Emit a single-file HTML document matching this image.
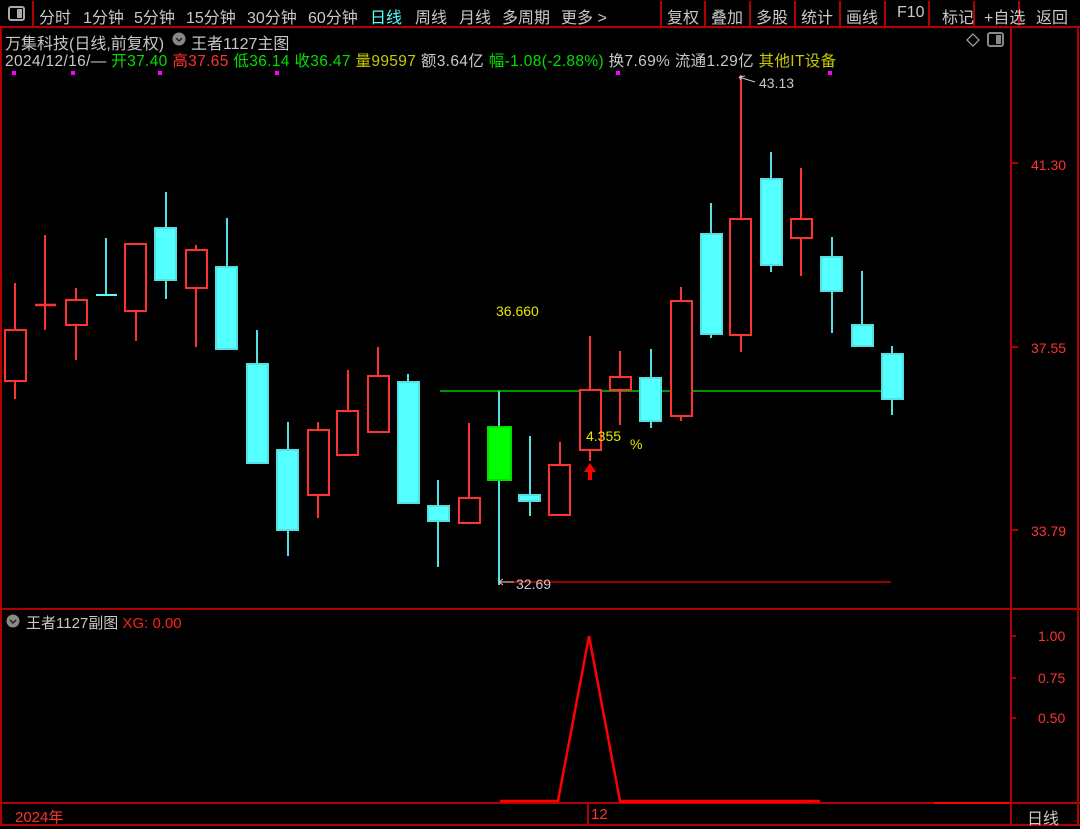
<!DOCTYPE html>
<html><head><meta charset="utf-8"><style>
*{margin:0;padding:0;box-sizing:border-box}
body{width:1080px;height:826px;background:#000;overflow:hidden;font-family:"Liberation Sans","Noto Sans CJK SC",sans-serif;position:relative;color:#c8c8c8}
.t{position:absolute;white-space:nowrap;font-size:15px}
</style></head><body>
<svg width="1080" height="826" style="position:absolute;left:0;top:0" font-family="Liberation Sans, Noto Sans CJK SC, sans-serif">
<g stroke="#b00000" stroke-width="2" fill="none">
<line x1="0" y1="27" x2="1080" y2="27"/>
<line x1="1" y1="27" x2="1" y2="826"/>
<line x1="1011" y1="27" x2="1011" y2="826"/>
<line x1="1078" y1="27" x2="1078" y2="826"/>
<line x1="0" y1="609" x2="1080" y2="609"/>
<line x1="0" y1="803" x2="1080" y2="803"/>
<line x1="0" y1="825" x2="1080" y2="825"/>
<line x1="33" y1="1" x2="33" y2="27"/>
<line x1="661" y1="1" x2="661" y2="27"/>
<line x1="705" y1="1" x2="705" y2="27"/>
<line x1="750" y1="1" x2="750" y2="27"/>
<line x1="795" y1="1" x2="795" y2="27"/>
<line x1="840" y1="1" x2="840" y2="27"/>
<line x1="885" y1="1" x2="885" y2="27"/>
<line x1="929" y1="1" x2="929" y2="27"/>
<line x1="974" y1="1" x2="974" y2="27"/>
<line x1="1019" y1="1" x2="1019" y2="27"/>
<line x1="588" y1="803" x2="588" y2="826"/>
<line x1="1011" y1="163" x2="1018" y2="163"/>
<line x1="1011" y1="347" x2="1018" y2="347"/>
<line x1="1011" y1="530" x2="1018" y2="530"/>
<line x1="1011" y1="636" x2="1016" y2="636"/>
<line x1="1011" y1="678" x2="1016" y2="678"/>
<line x1="1011" y1="718" x2="1016" y2="718"/>
</g>
<rect x="9" y="7" width="15" height="13" rx="2" fill="none" stroke="#aaa" stroke-width="2"/>
<rect x="17" y="9" width="5" height="9" fill="#aaa"/>
<rect x="988" y="33" width="15" height="13" rx="2" fill="none" stroke="#888" stroke-width="2"/>
<rect x="996" y="35" width="5" height="9" fill="#888"/>
<path d="M973 34 L979 40 L973 46 L967 40 Z" fill="none" stroke="#aaa" stroke-width="1.2"/>
<circle cx="179" cy="39" r="6.5" fill="#888"/><path d="M176 38 L179 41 L182 38" stroke="#222" stroke-width="1.5" fill="none"/>
<circle cx="13" cy="621" r="6.5" fill="#888"/><path d="M10 620 L13 623 L16 620" stroke="#222" stroke-width="1.5" fill="none"/>
<g fill="#ff00ff"><rect x="12" y="71" width="4" height="4"/><rect x="71" y="71" width="4" height="4"/><rect x="158" y="71" width="4" height="4"/><rect x="275" y="71" width="4" height="4"/><rect x="616" y="71" width="4" height="4"/><rect x="828" y="71" width="4" height="4"/></g>
<line x1="440" y1="391" x2="892" y2="391" stroke="#00c800" stroke-width="1.5"/>
<line x1="500" y1="582" x2="891" y2="582" stroke="#c80000" stroke-width="1.5"/>
<g stroke-width="2">
<g stroke="#ff3232" fill="#000">
<line x1="15" y1="283" x2="15" y2="399"/><rect x="5" y="330" width="21" height="51"/>
<line x1="45" y1="235" x2="45" y2="330"/><line x1="35" y1="305" x2="56" y2="305" stroke-width="2.5"/>
<line x1="76" y1="288" x2="76" y2="360"/><rect x="66" y="300" width="21" height="25"/>
<line x1="136" y1="243" x2="136" y2="341"/><rect x="125" y="244" width="21" height="67"/>
<line x1="196" y1="245" x2="196" y2="347"/><rect x="186" y="250" width="21" height="38"/>
<line x1="318" y1="422" x2="318" y2="518"/><rect x="308" y="430" width="21" height="65"/>
<line x1="348" y1="370" x2="348" y2="455"/><rect x="337" y="411" width="21" height="44"/>
<line x1="378" y1="347" x2="378" y2="432"/><rect x="368" y="376" width="21" height="56"/>
<line x1="469" y1="423" x2="469" y2="523"/><rect x="459" y="498" width="21" height="25"/>
<line x1="560" y1="442" x2="560" y2="515"/><rect x="549" y="465" width="21" height="50"/>
<line x1="590" y1="336" x2="590" y2="461"/><rect x="580" y="390" width="21" height="60"/>
<line x1="620" y1="351" x2="620" y2="425"/><rect x="610" y="377" width="21" height="13"/>
<line x1="681" y1="287" x2="681" y2="421"/><rect x="671" y="301" width="21" height="115"/>
<line x1="741" y1="75" x2="741" y2="352"/><rect x="730" y="219" width="21" height="116"/>
<line x1="801" y1="168" x2="801" y2="276"/><rect x="791" y="219" width="21" height="19"/>
</g>
<g stroke="#54e0e0" fill="#54ffff">
<line x1="106" y1="238" x2="106" y2="296"/><line x1="96" y1="295" x2="117" y2="295" stroke="#54ffff"/>
<line x1="166" y1="192" x2="166" y2="299"/><rect x="155" y="228" width="21" height="52"/>
<line x1="227" y1="218" x2="227" y2="349"/><rect x="216" y="267" width="21" height="82"/>
<line x1="257" y1="330" x2="257" y2="463"/><rect x="247" y="364" width="21" height="99"/>
<line x1="288" y1="422" x2="288" y2="556"/><rect x="277" y="450" width="21" height="80"/>
<line x1="408" y1="374" x2="408" y2="503"/><rect x="398" y="382" width="21" height="121"/>
<line x1="438" y1="480" x2="438" y2="567"/><rect x="428" y="506" width="21" height="15"/>
<line x1="499" y1="391" x2="499" y2="585"/>
<line x1="530" y1="436" x2="530" y2="516"/><rect x="519" y="495" width="21" height="6"/>
<line x1="651" y1="349" x2="651" y2="428"/><rect x="640" y="378" width="21" height="43"/>
<line x1="711" y1="203" x2="711" y2="338"/><rect x="701" y="234" width="21" height="100"/>
<line x1="771" y1="152" x2="771" y2="272"/><rect x="761" y="179" width="21" height="86"/>
<line x1="832" y1="237" x2="832" y2="333"/><rect x="821" y="257" width="21" height="34"/>
<line x1="862" y1="271" x2="862" y2="346"/><rect x="852" y="325" width="21" height="21"/>
<line x1="892" y1="346" x2="892" y2="415"/><rect x="882" y="354" width="21" height="45"/>
</g>
<rect x="488" y="427" width="23" height="53" fill="#00ff00" stroke="#00e000"/>
</g>
<path d="M590 463 L584 472 L588 472 L588 480 L592 480 L592 472 L596 472 Z" fill="#ff0000"/>
<path d="M739 77 L755 82 M739 77 L745 76 M739 77 L741 80" stroke="#ccc" stroke-width="1" fill="none"/>
<path d="M499 582 L514 582 M499 582 L503 579 M499 582 L503 585" stroke="#ccc" stroke-width="1" fill="none"/>
<polyline points="500,801 558,801 589,636 620,801 820,801" fill="none" stroke="#ff0000" stroke-width="2.5"/>
<line x1="620" y1="802" x2="810" y2="802" stroke="#ff0000" stroke-width="2"/>
<line x1="934" y1="803" x2="1010" y2="803" stroke="#ff0000" stroke-width="2"/>
</svg>

<div class="t" style="left:39px;top:4px;font-size:16px">分时</div>
<div class="t" style="left:83px;top:4px;font-size:16px">1分钟</div>
<div class="t" style="left:134px;top:4px;font-size:16px">5分钟</div>
<div class="t" style="left:186px;top:4px;font-size:16px">15分钟</div>
<div class="t" style="left:247px;top:4px;font-size:16px">30分钟</div>
<div class="t" style="left:308px;top:4px;font-size:16px">60分钟</div>
<div class="t" style="left:370px;top:4px;font-size:16px;color:#54ffff">日线</div>
<div class="t" style="left:415px;top:4px;font-size:16px">周线</div>
<div class="t" style="left:459px;top:4px;font-size:16px">月线</div>
<div class="t" style="left:502px;top:4px;font-size:16px">多周期</div>
<div class="t" style="left:561px;top:4px;font-size:16px">更多 &gt;</div>
<div class="t" style="left:667px;top:4px;font-size:16px">复权</div>
<div class="t" style="left:711px;top:4px;font-size:16px">叠加</div>
<div class="t" style="left:756px;top:4px;font-size:16px">多股</div>
<div class="t" style="left:801px;top:4px;font-size:16px">统计</div>
<div class="t" style="left:846px;top:4px;font-size:16px">画线</div>
<div class="t" style="left:897px;top:4px;font-size:16px">F10</div>
<div class="t" style="left:942px;top:4px;font-size:16px">标记</div>
<div class="t" style="left:984px;top:4px;font-size:16px">+自选</div>
<div class="t" style="left:1036px;top:4px;font-size:16px">返回</div>

<div class="t" style="left:5px;top:30px;font-size:16px">万集科技(日线,前复权)</div>
<div class="t" style="left:191px;top:30px;font-size:16px">王者1127主图</div>
<div class="t" style="left:5px;top:49px;font-size:15.5px;letter-spacing:0.35px">2024/12/16/— <span style="color:#00e000">开37.40</span> <span style="color:#ff3232">高37.65</span> <span style="color:#00e000">低36.14</span> <span style="color:#00e000">收36.47</span> <span style="color:#c8c800">量99597</span> 额3.64亿 <span style="color:#00e000">幅-1.08(-2.88%)</span> 换7.69% 流通1.29亿 <span style="color:#c8c800">其他IT设备</span></div>

<div class="t" style="left:759px;top:75px;font-size:14px">43.13</div>
<div class="t" style="left:516px;top:576px;font-size:14px">32.69</div>
<div class="t" style="left:496px;top:303px;font-size:14px;color:#e6e600">36.660</div>
<div class="t" style="left:586px;top:428px;font-size:14px;color:#e6e600">4.355</div>
<div class="t" style="left:630px;top:436px;font-size:14px;color:#e6e600">%</div>

<div class="t" style="left:1031px;top:157px;font-size:14px;color:#ff3232">41.30</div>
<div class="t" style="left:1031px;top:340px;font-size:14px;color:#ff3232">37.55</div>
<div class="t" style="left:1031px;top:523px;font-size:14px;color:#ff3232">33.79</div>
<div class="t" style="left:1038px;top:628px;font-size:14px;color:#ff3232">1.00</div>
<div class="t" style="left:1038px;top:670px;font-size:14px;color:#ff3232">0.75</div>
<div class="t" style="left:1038px;top:710px;font-size:14px;color:#ff3232">0.50</div>

<div class="t" style="left:26px;top:612px;font-size:15px">王者1127副图 <span style="color:#ff2020">XG: 0.00</span></div>
<div class="t" style="left:15px;top:806px;font-size:15px;color:#ff3232">2024年</div>
<div class="t" style="left:591px;top:806px;font-size:15px;color:#ff3232">12</div>
<div class="t" style="left:1027px;top:805px;font-size:16px">日线</div>
</body></html>
